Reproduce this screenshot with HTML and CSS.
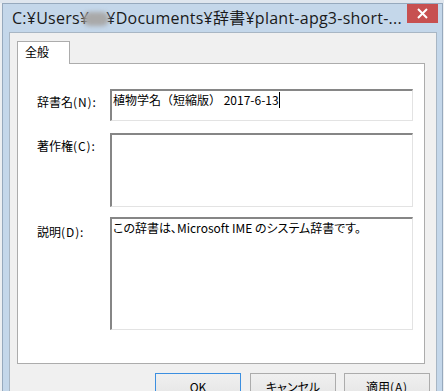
FILE: index.html
```html
<!DOCTYPE html>
<html lang="ja">
<head>
<meta charset="utf-8">
<link rel="stylesheet" href="styles.css">
</head>
<body>
<div class="screen">
  <div class="behind"></div>
  <div class="window">
    <div class="titlebar">
      <div class="title">C:¥Users¥<span class="blur"></span>¥Documents¥辞書¥plant-apg3-short-...</div>
      <div class="close"><svg width="11" height="11" viewBox="0 0 11 11"><path d="M1 1 L10 10 M10 1 L1 10" stroke="#fff" stroke-width="2" fill="none"/></svg></div>
    </div>
    <div class="client">
      <div class="tabs"><div class="tab">全般</div></div>
      <div class="panel">
        <div class="row">
          <div class="label">辞書名<span class="ascii">(N):</span></div>
          <div class="field f1">植物学名（短縮版） 2017-6-13<span class="caret"></span></div>
        </div>
        <div class="row">
          <div class="label">著作権<span class="ascii">(C):</span></div>
          <div class="field f2"></div>
        </div>
        <div class="row">
          <div class="label">説明<span class="ascii">(D):</span></div>
          <div class="field f3 prop">この辞書は、Microsoft IME のシステム辞書です。</div>
        </div>
      </div>
      <div class="buttons">
        <div class="btn default">OK</div>
        <div class="btn prop">キャンセル</div>
        <div class="btn">適用<span class="ascii">(A)</span></div>
      </div>
    </div>
  </div>
</div>
</body>
</html>
```
FILE: styles.css
```css
html, body { margin: 0; padding: 0; }
body { background: #e6e6e6; font-family: "Noto Sans CJK JP", "Noto Sans", sans-serif; }
.screen { position: relative; width: 444px; height: 391px; overflow: hidden; background: #eceff2; }
.behind { position: absolute; left: 0; top: 0; width: 444px; height: 3px; background: #dfe6ee; }
.window {
  position: absolute; left: 2px; top: 3px;
  width: 439px; height: 400px;
  background: #c4d7ea;
  border: 1px solid #96a9bd;
}
.titlebar { display: flex; justify-content: space-between; height: 28px; }
.title {
  font-family: "Open Sans", "Noto Sans CJK JP", sans-serif;
  font-size: 16px; letter-spacing: 0.25px; color: #1a1a1a;
  padding: 3px 0 0 9px; line-height: 22px; white-space: nowrap;
}
.blur {
  display: inline-block; width: 26px; height: 14px; margin: 0 -3px 0 -6px;
  vertical-align: -2px; background: #a9a9a9; border-radius: 7px; filter: blur(2px);
}
.close {
  width: 31px; height: 19px; margin-right: 4px; background: #c75050;
  display: flex; align-items: center; justify-content: center;
}
.client {
  margin: 0 5px 0 6px; height: 380px;
  background: #f0f0f0; border: 1px solid #a8b6c4;
  font-size: 12px; color: #000;
}
.tabs { padding: 8px 0 0 7px; display: flex; }
.tab {
  position: relative; z-index: 1;
  width: 44px; height: 22px; padding-left: 7px;
  background: #fff; border: 1px solid #acacac; border-bottom: none;
  line-height: 20px; margin-bottom: -1px;
}
.panel {
  margin-left: 7px; width: 408px; height: 301px;
  background: #fff; border: 1px solid #acacac;
  padding: 25px 0 0 19px; box-sizing: border-box;
  display: flex; flex-direction: column; gap: 12px;
}
.row { display: flex; }
.label { width: 73px; padding-top: 4px; line-height: 17px; }
.ascii { letter-spacing: 0.9px; }
.field {
  width: 303px; box-sizing: border-box;
  border-top: 2px solid #868686; border-left: 2px solid #868686;
  border-right: 1px solid #e3e3e3; border-bottom: 1px solid #e3e3e3;
  padding: 0 0 0 1px; line-height: 17px; white-space: nowrap;
}
.prop { font-feature-settings: "palt"; }
.f1 { height: 32px; }
.f2 { height: 74px; }
.f3 { height: 113px; margin-top: -2px; }
.caret { display: inline-block; width: 1px; height: 16px; background: #000; vertical-align: -3px; }
.buttons { display: flex; justify-content: flex-end; gap: 8px; padding: 9px 6px 0 0; }
.buttons .btn:first-child { margin-right: 1px; }
.btn {
  width: 84px; height: 23px; box-sizing: content-box;
  border: 1px solid #acacac;
  background: linear-gradient(#f0f0f0, #e5e5e5);
  text-align: center; line-height: 25px; font-size: 12px;
}
.btn.default { border-color: #3c8fe0; }
```
